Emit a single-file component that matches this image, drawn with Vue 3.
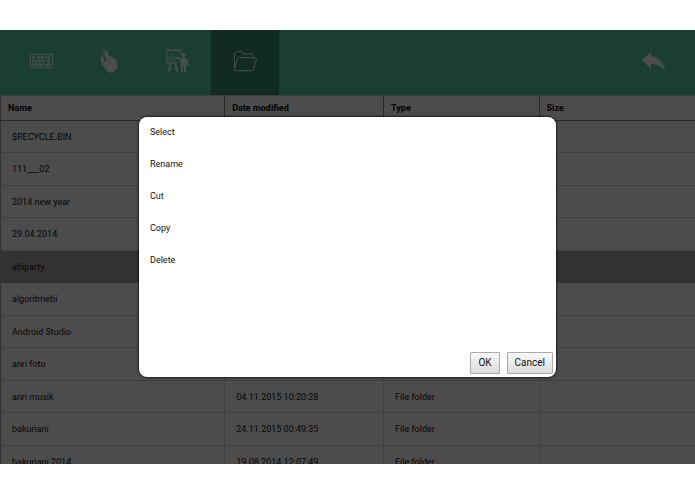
<script setup>
import { ref } from "vue";

const tools = ["keyboard", "touch", "board", "folder"];
const activeTool = ref("folder");

const columns = ["Name", "Date modified", "Type", "Size"];

const files = [
  { name: "$RECYCLE.BIN", date: "04.11.2015 10:12:40" },
  { name: "111___02", date: "04.11.2015 10:14:02" },
  { name: "2014 new year", date: "04.11.2015 10:15:31" },
  { name: "29.04.2014", date: "04.11.2015 10:16:18" },
  { name: "abiparty", date: "04.11.2015 10:17:05" },
  { name: "algoritmebi", date: "04.11.2015 10:18:22" },
  { name: "Android Studio", date: "04.11.2015 10:18:54" },
  { name: "anri foto", date: "04.11.2015 10:19:37" },
  { name: "anri musik", date: "04.11.2015 10:20:28" },
  { name: "bakuriani", date: "24.11.2015 00:49:35" },
  { name: "bakuriani 2014", date: "19.08.2014 12:07:49" },
];
const selected = ref("abiparty");

const actions = ["Select", "Rename", "Cut", "Copy", "Delete"];
const isMenu = ref(true);

function closeMenu() {
  isMenu.value = false;
}
</script>

<template>
  <main class="screen">
    <div class="app">
      <nav class="toolbar">
        <button
          v-for="tool in tools"
          :key="tool"
          class="tool"
          :class="{ active: tool === activeTool }"
          :aria-label="tool"
          @click="activeTool = tool"
        >
          <svg v-if="tool === 'keyboard'" class="icon" viewBox="0 0 72 72">
            <rect x="4" y="16" width="66" height="40" class="line" />
            <path
              class="keys"
              d="M9 25H17M25 25H32M35 25H42M45 25H52M55 25H63M9 36H16M19 36H26M29 36H36M39 36H46M54 36H63M9 47H16M19 47H45M49 47H63"
            />
            <path class="line" d="M60 32V46" />
          </svg>
          <svg v-else-if="tool === 'touch'" class="icon" viewBox="0 0 72 72">
            <circle cx="25" cy="9" r="8" class="ring" />
            <path
              d="M21 11C21 5 29 5 31 11L36 23C39 19 43 21 45 26C48 23 52 26 53 30C56 29 59 32 59 37L61 56L48 70C40 73 33 69 29 64L16 47C11 40 10 29 13 20C16 18 18 20 19 25L23 38L29 36Z"
            />
          </svg>
          <svg v-else-if="tool === 'board'" class="icon" viewBox="0 0 72 72">
            <path class="line" d="M47 16V4H5V42H35M47 38V42M2 3H49" />
            <path class="line" d="M13 22V36M20 16V36M27 26V36" />
            <path class="leg" d="M17 43L10 70M31 43L38 70M13 58H20M28 58H35" />
            <circle cx="55" cy="19" r="6" />
            <path
              d="M30 22L48 27H61C65 28 66 31 67 35L72 49L68 51L63 41V70H57V51H54V70H48V34L31 27Z"
            />
          </svg>
          <svg v-else class="icon" viewBox="0 0 72 72">
            <path
              class="line"
              d="M4 62V15C4 12 5 11 8 11L12 7H25L31 15H58C60 15 61 17 61 19V26M4 62L13 30C14 27 15 26 18 26H67C70 26 71 28 70 31L61 61C60 64 59 65 56 65H7C5 65 4 64 4 62Z"
            />
          </svg>
        </button>
        <button class="tool back" aria-label="back">
          <svg class="icon" viewBox="0 0 72 72">
            <path d="M0 34L27 8V22C50 23 66 40 69 65C58 51 45 45 27 45V59Z" />
          </svg>
        </button>
      </nav>

      <table class="files">
        <thead>
          <tr>
            <th v-for="col in columns" :key="col">{{ col }}</th>
          </tr>
        </thead>
        <tbody>
          <tr
            v-for="file in files"
            :key="file.name"
            :class="{ selected: file.name === selected }"
          >
            <td>{{ file.name }}</td>
            <td>{{ file.date }}</td>
            <td>File folder</td>
            <td></td>
          </tr>
        </tbody>
      </table>

      <div v-if="isMenu" class="overlay">
        <section class="dialog" role="dialog">
          <ul class="actions">
            <li v-for="action in actions" :key="action">
              <button class="action">{{ action }}</button>
            </li>
          </ul>
          <footer class="buttons">
            <button class="btn" @click="closeMenu">OK</button>
            <button class="btn" @click="closeMenu">Cancel</button>
          </footer>
        </section>
      </div>
    </div>
  </main>
</template>

<style>
body {
  background: #fff;
}
</style>

<style scoped>
.screen {
  box-sizing: border-box;
  height: 100vh;
  padding: 30px 0;
  font-family: Roboto, sans-serif;
  font-size: 9px;
  color: #111;
}

.app {
  position: relative;
  height: 100%;
  overflow: hidden;
  background: #fff;
}

button {
  margin: 0;
  font-family: inherit;
  color: inherit;
  cursor: pointer;
}

.toolbar {
  display: flex;
  height: 65px;
  padding: 0 7px;
  background: #57d2a7;
}

.tool {
  display: flex;
  align-items: center;
  justify-content: center;
  width: 68px;
  padding: 0 0 3px;
  border: none;
  background: none;
}

.tool.active {
  background: #3c8f73;
}

.back {
  margin-left: auto;
}

.icon {
  width: 24px;
  height: 24px;
  fill: #fff;
}

.line,
.keys,
.leg,
.ring {
  fill: none;
  stroke: #fff;
  stroke-width: 3;
}

.keys {
  stroke-width: 7;
}

.leg {
  stroke-width: 5;
}

.ring {
  stroke-width: 2;
}

.files {
  width: 100%;
  table-layout: fixed;
  border-collapse: separate;
  border-spacing: 0;
  border-left: 1px solid #aaa;
}

th,
td {
  box-sizing: border-box;
  height: 33px;
  padding: 0 11px;
  border-right: 1px solid #d4d4d4;
  border-bottom: 1px solid #d4d4d4;
  text-align: left;
  white-space: nowrap;
}

th {
  height: 26px;
  padding: 0 7px;
  border-top: 1px solid #ccc;
  border-right-color: #888;
  border-bottom-color: #888;
  font-weight: 700;
  color: #000;
}

th:nth-child(1) {
  width: 32.3%;
}

th:nth-child(2) {
  width: 22.9%;
}

th:nth-child(3) {
  width: 22.4%;
}

th:last-child,
td:last-child {
  border-right: none;
}

tbody tr:nth-child(odd) td {
  height: 32px;
}

.selected td {
  border-color: #a8a8a8;
  background: #a8a8a8;
}

.overlay {
  position: absolute;
  inset: 0;
  display: flex;
  align-items: center;
  justify-content: center;
  background: rgba(0, 0, 0, 0.7);
}

.dialog {
  display: flex;
  flex-direction: column;
  justify-content: space-between;
  width: 60%;
  height: 60%;
  border-radius: 8px;
  background: #fff;
  box-shadow: 0 0 2px 1px rgba(0, 0, 0, 0.6);
}

.actions {
  margin: 0;
  padding: 0;
  list-style: none;
}

.action {
  display: block;
  width: 100%;
  height: 32px;
  padding: 0 11px 1px;
  border: none;
  background: none;
  font-size: 9px;
  text-align: left;
}

.buttons {
  display: flex;
  justify-content: flex-end;
  gap: 7px;
  padding: 3px;
}

.btn {
  height: 22px;
  padding: 0 7px 1px;
  border: 1px solid #aaa;
  border-radius: 1px;
  background: linear-gradient(#f8f8f8, #dcdcdc);
  font-size: 10px;
}
</style>
